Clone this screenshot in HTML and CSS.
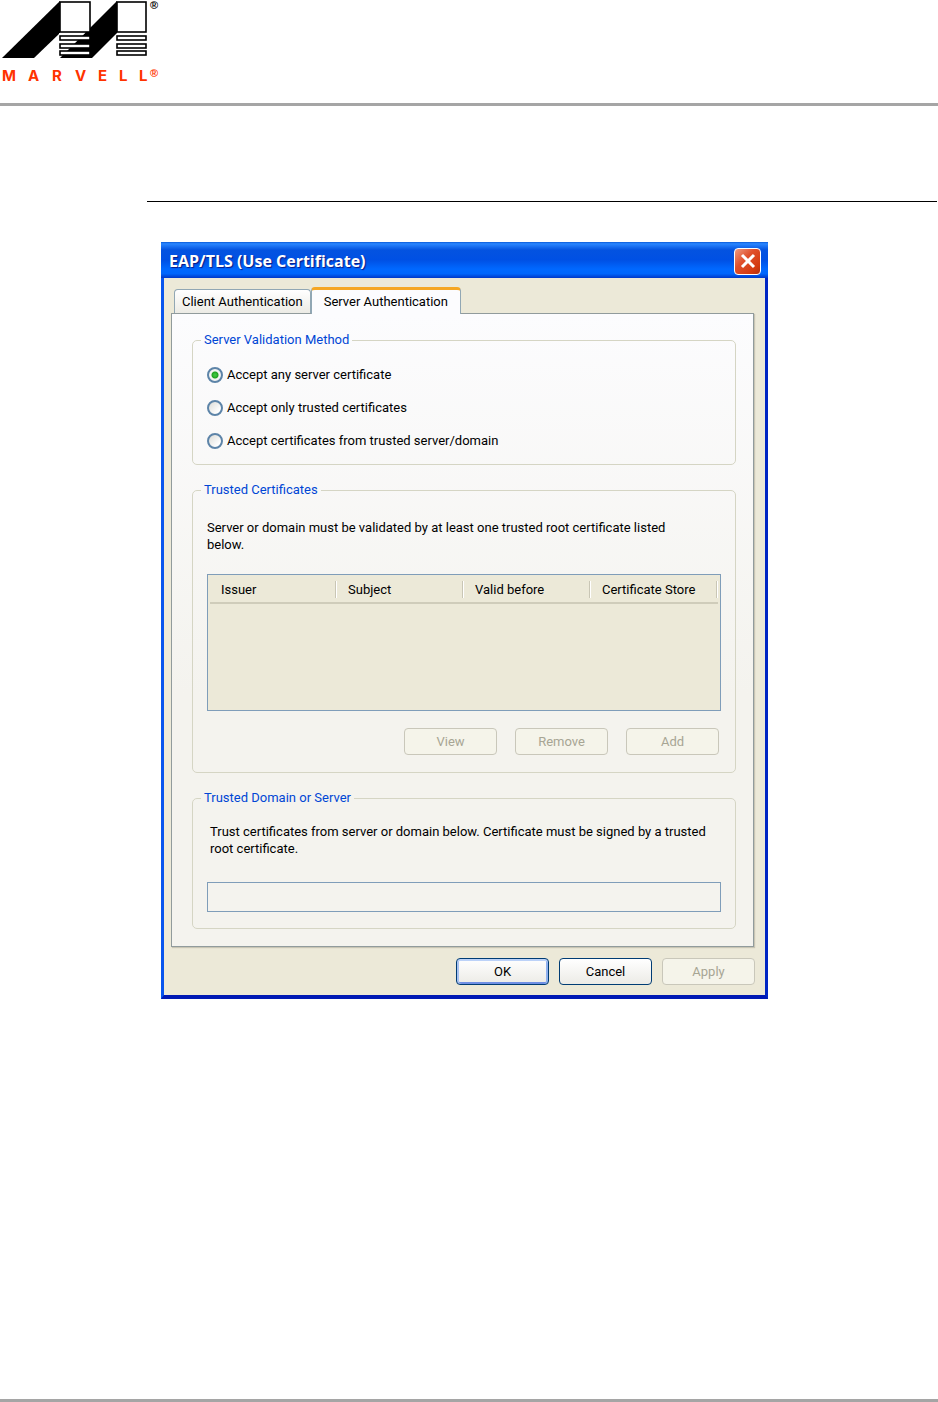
FILE: index.html
```html
<!DOCTYPE html>
<html lang="en">
<head>
<meta charset="utf-8">
<meta name="viewport" content="width=device-width, initial-scale=1">
<title>EAP/TLS (Use Certificate)</title>
<link rel="stylesheet" href="styles.css">
</head>
<body>

<header class="page-header">
  <svg class="logo" width="162" height="84" viewBox="0 0 162 84" role="img" aria-label="Marvell">
    <path d="M60 1 L2 58 H34 L60 33 Z"/>
    <path d="M117 1 L60 58 H92 L117 33 Z"/>
    <path d="M59 33 H85 L60 57 H59 Z" fill="#fff"/>
    <g fill="#fff" stroke="#000" stroke-width="1.6">
      <rect x="60" y="2" width="30" height="30"/>
      <rect x="117" y="2" width="29" height="30"/>
      <rect x="60" y="36" width="30" height="4"/>
      <rect x="60" y="44" width="30" height="4"/>
      <rect x="60" y="51" width="30" height="4"/>
      <rect x="117" y="36" width="29" height="4"/>
      <rect x="117" y="44" width="29" height="4"/>
      <rect x="117" y="51" width="29" height="4"/>
    </g>
    <g class="logo-name">
      <text x="2" y="81">M</text>
      <text x="28" y="81">A</text>
      <text x="52" y="81">R</text>
      <text x="75" y="81">V</text>
      <text x="98" y="81">E</text>
      <text x="119" y="81">L</text>
      <text x="139" y="81">L</text>
    </g>
    <text class="logo-reg" x="150" y="9">®</text>
    <text class="logo-reg red" x="150" y="77">®</text>
  </svg>
</header>

<main class="content">
  <form class="dialog" id="eap">
    <div class="titlebar">
      <h1>EAP/TLS (Use Certificate)</h1>
      <button type="button" class="close" aria-label="Close">
        <svg width="16" height="16" viewBox="0 0 16 16"><path d="M2 2 L14 14 M14 2 L2 14" stroke="#fff" stroke-width="3"/></svg>
      </button>
    </div>

    <div class="tabs" role="tablist">
      <button type="button" class="tab" role="tab">Client Authentication</button>
      <button type="button" class="tab active" role="tab" aria-selected="true">Server Authentication</button>
    </div>

    <div class="panel">
      <fieldset>
        <legend>Server Validation Method</legend>
        <div class="group methods">
          <label><input type="radio" name="method" value="any" checked> Accept any server certificate</label>
          <label><input type="radio" name="method" value="trusted"> Accept only trusted certificates</label>
          <label><input type="radio" name="method" value="domain"> Accept certificates from trusted server/domain</label>
        </div>
      </fieldset>

      <fieldset>
        <legend>Trusted Certificates</legend>
        <div class="group certs">
          <p>Server or domain must be validated by at least one trusted root certificate listed below.</p>
          <div class="list">
            <table>
              <thead>
                <tr><th>Issuer</th><th>Subject</th><th>Valid before</th><th>Certificate Store</th></tr>
              </thead>
              <tbody></tbody>
            </table>
          </div>
          <div class="buttons">
            <button type="button" disabled>View</button>
            <button type="button" disabled>Remove</button>
            <button type="button" disabled>Add</button>
          </div>
        </div>
      </fieldset>

      <fieldset>
        <legend>Trusted Domain or Server</legend>
        <div class="group domain">
          <p><label for="domain">Trust certificates from server or domain below. Certificate must be signed by a trusted root certificate.</label></p>
          <input type="text" id="domain" name="domain" disabled>
        </div>
      </fieldset>
    </div>

    <div class="actions">
      <button type="submit" class="default">OK</button>
      <button type="button">Cancel</button>
      <button type="button" disabled>Apply</button>
    </div>
  </form>
</main>

<footer class="page-footer"></footer>

</body>
</html>
```
FILE: styles.css
```css
* {
    box-sizing: border-box;
}

body {
    margin: 0;
    min-height: 100vh;
    display: flex;
    flex-direction: column;
    background: #fff;
    color: #000;
    font: 13px/17px Roboto, Arial, sans-serif;
}

/* Page frame */
.page-header {
    height: 106px;
    border-bottom: 3px solid #a5a5a5;
}

.logo {
    display: block;
}

.logo-name {
    fill: #ff3300;
    font: bold 15px Inter, sans-serif;
}

.logo-reg {
    font: bold 11px "Liberation Sans", Arial, sans-serif;
}

.logo-reg.red {
    fill: #ff3300;
}

.content {
    flex: 1;
    margin: 95px 1px 0 147px;
    padding: 40px 14px;
    border-top: 1px solid #000;
}

.page-footer {
    border-top: 3px solid #a5a5a5;
}

/* Dialog window */
.dialog {
    max-width: 607px;
    border: solid;
    border-width: 0 3px 4px;
    border-color: #0831d9 #0026c4 #0019b4 #0855ee;
    background: #ece9d8;
}

.titlebar {
    display: flex;
    align-items: center;
    justify-content: space-between;
    height: 36px;
    margin: 0 -3px;
    padding: 2px 7px 0 8px;
    background: linear-gradient(#0a5ad8, #2a86ff 5%, #0453e0 22%, #0050e4 50%, #0068ff 75%, #0066fc 88%, #0038c8);
}

.titlebar h1 {
    margin: 0;
    color: #fff;
    font: bold 16px/20px "Open Sans", sans-serif;
    text-shadow: 1px 1px 1px #0a1883;
}

.close {
    display: flex;
    align-items: center;
    justify-content: center;
    width: 27px;
    height: 27px;
    padding: 0;
    border: 1px solid #fff;
    border-radius: 4px;
    background: linear-gradient(135deg, #ee9a80, #e0502c 40%, #d33a10 80%, #b03010);
}

.tabs {
    display: flex;
    align-items: flex-end;
    height: 35px;
    padding: 0 10px;
}

.tab {
    height: 24px;
    padding: 0 7px;
    border: 1px solid #91a7b4;
    border-bottom: 0;
    border-radius: 4px 4px 0 0;
    background: linear-gradient(#fff, #ecebe5);
    font: inherit;
}

.tab.active {
    position: relative;
    height: 27px;
    margin-bottom: -1px;
    padding: 0 12px 2px;
    border-top: 3px solid #f5a623;
    background: #fcfcfe;
}

.panel {
    display: grid;
    gap: 17px;
    margin: 0 11px 0 7px;
    padding: 18px 17px 17px 20px;
    border: 1px solid #919b9c;
    box-shadow: 1px 1px 1px #c8c5b4;
    background: linear-gradient(#fcfcfe, #f4f3ee 60%);
}

fieldset {
    min-width: 0;
    margin: 0;
    padding: 0;
    border: 1px solid #d5d5c4;
    border-radius: 5px;
}

legend {
    margin-left: 8px;
    padding: 0 3px;
    color: #0046d5;
    line-height: 16px;
}

.group {
    padding: 0 14px 17px;
}

.group p {
    margin: 0;
}

/* Validation method */
.methods {
    padding-top: 10px;
    padding-bottom: 7px;
}

.methods label {
    display: flex;
    align-items: center;
    gap: 4px;
    height: 33px;
}

.methods input {
    appearance: none;
    width: 16px;
    height: 16px;
    margin: 0;
    border: 2px solid #5d84a8;
    border-radius: 50%;
    background: linear-gradient(135deg, #dcdcd7, #fff 80%);
}

.methods input:checked {
    background: radial-gradient(circle, #3cc43c 0 1px, #21a121 3px, #f4f4f2 4px);
}

/* Certificate list */
.certs {
    padding-top: 21px;
}

.certs p {
    padding-right: 24px;
}

.list {
    height: 137px;
    margin-top: 21px;
    padding: 2px;
    border: 1px solid #7f9db9;
    background: #ece9d8;
}

.list table {
    width: 100%;
    table-layout: fixed;
    border-collapse: collapse;
}

.list tr {
    height: 26px;
    border-bottom: 2px solid #cfccba;
}

.list th {
    padding: 0 11px;
    font-weight: normal;
    text-align: left;
    white-space: nowrap;
    background: linear-gradient(90deg, #c9c6b5 1px, #fff 1px) no-repeat right center / 2px 17px;
}

.buttons,
.actions {
    display: flex;
    justify-content: flex-end;
}

.buttons {
    gap: 18px;
    margin-top: 17px;
    padding-right: 2px;
}

.actions {
    gap: 10px;
    padding: 11px 10px 10px;
}

.buttons button,
.actions button {
    width: 93px;
    height: 27px;
    padding: 0;
    border: 1px solid #003c74;
    border-radius: 4px;
    background: linear-gradient(#fff, #ecebe6);
    color: #000;
    font: inherit;
}

.actions .default {
    box-shadow: inset 0 2px #bcd2f8, inset 2px 0 #a8c2f0, inset -2px 0 #8fb0ee, inset 0 -2px #6f8fe4;
}

.buttons button:disabled,
.actions button:disabled {
    border-color: #c9c7ba;
    background: #f5f4ea;
    color: #a7a594;
}

/* Domain or server */
.domain {
    padding-top: 17px;
    padding-bottom: 16px;
}

.domain p {
    padding-left: 3px;
}

.domain input {
    display: block;
    width: 100%;
    height: 30px;
    margin-top: 25px;
    border: 1px solid #7f9db9;
    background: transparent;
    font: inherit;
}
```
